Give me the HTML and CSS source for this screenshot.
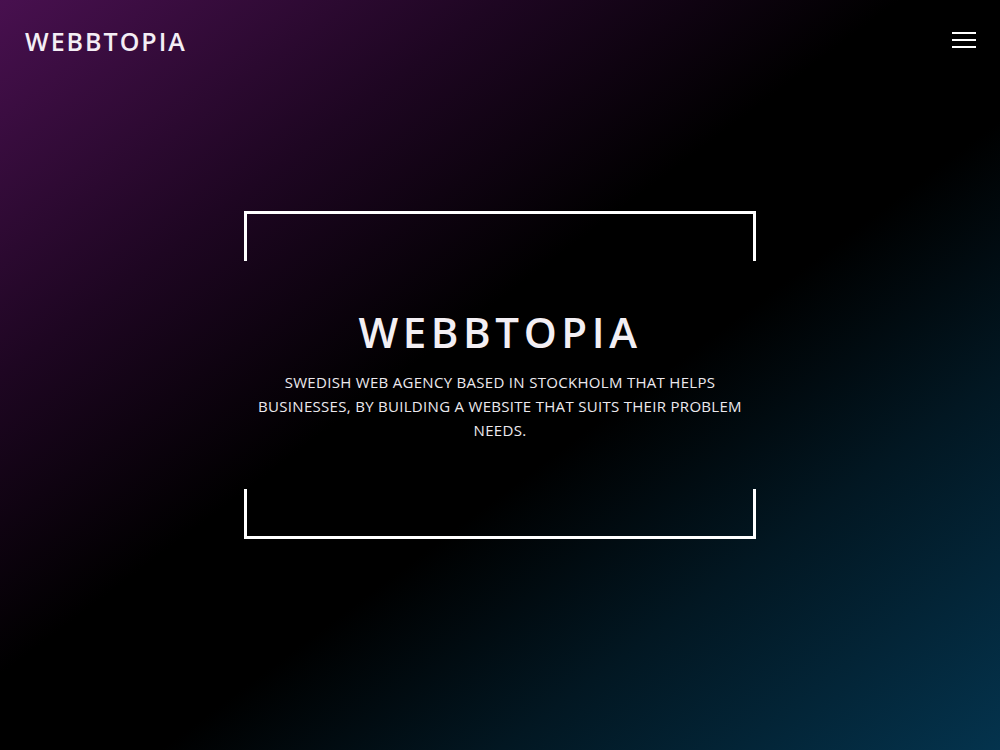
FILE: index.html
```html
<!DOCTYPE html>
<html lang="en">
<head>
<meta charset="utf-8">
<title>Webbtopia</title>
<link rel="stylesheet" href="styles.css">
</head>
<body>
<div class="page">
  <header class="topbar">
    <a class="logo" href="#">WEBBTOPIA</a>
    <button class="menu" aria-label="Menu">
      <span></span><span></span><span></span>
    </button>
  </header>
  <main class="hero">
    <section class="frame">
      <div class="bracket bracket-top"></div>
      <div class="intro">
        <h1 class="title">WEBBTOPIA</h1>
        <p class="lead">Swedish web agency based in Stockholm that helps businesses, by building a website that suits their problem needs.</p>
      </div>
      <div class="bracket bracket-bottom"></div>
    </section>
  </main>
</div>
</body>
</html>
```
FILE: styles.css
```css
* { box-sizing: border-box; }

html, body {
  margin: 0;
  padding: 0;
}

body {
  font-family: "Open Sans", "DejaVu Sans", sans-serif;
  color: #f2eef4;
}

.page {
  width: 100%;
  height: 750px;
  background: linear-gradient(to bottom right, #48104f 0%, #1e0622 25%, #000 45%, #000 58%, #021722 75%, #04334d 100%);
  display: flex;
  flex-direction: column;
}

.topbar {
  display: flex;
  justify-content: space-between;
  align-items: flex-start;
  padding: 21px 24px 0 25px;
  height: 80px;
}

.logo {
  font-size: 25px;
  font-weight: 600;
  letter-spacing: 2px;
  color: #f4eef5;
  text-decoration: none;
  line-height: 40px;
}

.menu {
  background: none;
  border: 0;
  padding: 0;
  margin-top: 11px;
  width: 24px;
  display: flex;
  flex-direction: column;
  gap: 5px;
  cursor: pointer;
}

.menu span {
  display: block;
  height: 2px;
  width: 24px;
  background: #fff;
}

.hero {
  display: flex;
  justify-content: center;
  padding-top: 131px;
}

.frame {
  width: 512px;
  display: flex;
  flex-direction: column;
}

.bracket {
  height: 50px;
  border-left: 3px solid #fff;
  border-right: 3px solid #fff;
}

.bracket-top { border-top: 3px solid #fff; }
.bracket-bottom { border-bottom: 3px solid #fff; }

.intro {
  height: 228px;
  display: flex;
  flex-direction: column;
  align-items: center;
  padding-top: 47px;
  text-align: center;
}

.title {
  margin: 0;
  font-size: 42px;
  font-weight: 600;
  letter-spacing: 4.6px;
  line-height: 48px;
  color: #f3eff4;
}

.lead {
  margin: 14px 0 0 0;
  font-size: 15px;
  line-height: 24px;
  text-transform: uppercase;
  padding: 0 8px;
  letter-spacing: 0.3px;
  color: #ece9ee;
}
```
